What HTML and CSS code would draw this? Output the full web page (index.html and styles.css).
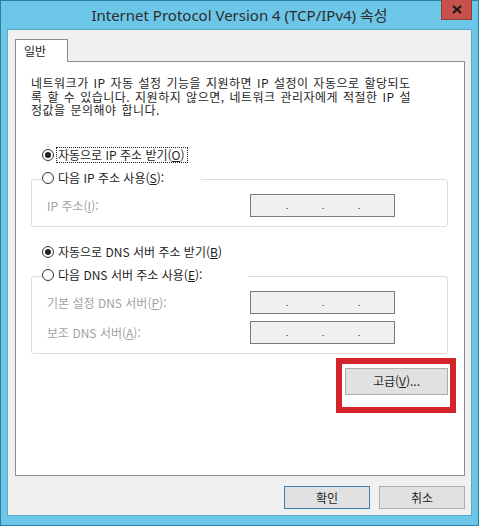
FILE: index.html
```html
<!DOCTYPE html>
<html lang="ko">
<head>
<meta charset="UTF-8" />
<title>Internet Protocol Version 4 (TCP/IPv4) 속성</title>
<link rel="stylesheet" href="styles.css">
</head>
<body>
<div class="window">
  <div class="titlebar">
    <div></div>
    <div class="title">Internet Protocol Version 4 (TCP/IPv4) 속성</div>
    <div class="close">
      <svg width="10" height="9" viewBox="0 0 10 9"><path d="M1 1 L9 8 M9 1 L1 8" stroke="#1b1b1b" stroke-width="2.2" fill="none"/></svg>
    </div>
  </div>

  <div class="client">
    <div class="tabs">
      <div class="tab">일반</div>
    </div>
    <div class="panel">
      <p class="intro">네트워크가 IP 자동 설정 기능을 지원하면 IP 설정이 자동으로 할당되도<br>록 할 수 있습니다. 지원하지 않으면, 네트워크 관리자에게 적절한 IP 설<br>정값을 문의해야 합니다.</p>

      <div class="radio-row">
        <span class="radio checked"></span>
        <span class="focus">자동으로 IP 주소 받기(<u>O</u>)</span>
      </div>

      <fieldset class="group">
        <legend class="legend-ip">
          <span class="radio"></span>
          <span>다음 IP 주소 사용(<u>S</u>):</span>
        </legend>
        <div class="field first">
          <span class="field-label">IP 주소(<u>I</u>):</span>
          <div class="ipbox"><i></i><i></i><i></i></div>
        </div>
      </fieldset>

      <div class="radio-row dns-auto">
        <span class="radio checked"></span>
        <span>자동으로 DNS 서버 주소 받기(<u>B</u>)</span>
      </div>

      <fieldset class="group">
        <legend class="legend-dns">
          <span class="radio"></span>
          <span>다음 DNS 서버 주소 사용(<u>E</u>):</span>
        </legend>
        <div class="field first">
          <span class="field-label">기본 설정 DNS 서버(<u>P</u>):</span>
          <div class="ipbox"><i></i><i></i><i></i></div>
        </div>
        <div class="field">
          <span class="field-label">보조 DNS 서버(<u>A</u>):</span>
          <div class="ipbox"><i></i><i></i><i></i></div>
        </div>
      </fieldset>

      <div class="advanced-row">
        <div class="highlight">
          <button class="btn advanced">고급(<u>V</u>)...</button>
        </div>
      </div>
    </div>

    <div class="actions">
      <button class="btn default">확인</button>
      <button class="btn">취소</button>
    </div>
  </div>
</div>
</body>
</html>
```

FILE: styles.css
```css
body {
  margin: 0; background: #fff;
  font-family: "Noto Sans CJK KR", "Noto Sans", sans-serif; font-size: 12px; color: #1e1e1e;
}
.window {
  width: 479px; height: 526px; box-sizing: border-box;
  border: 1px solid #2a7fa5; background: #6cc6e7;
  display: flex; flex-direction: column;
}
.titlebar {
  height: 28px; display: grid; grid-template-columns: 1fr auto 1fr; align-items: start;
}
.title {
  font-family: "Noto Sans", "Noto Sans CJK KR", sans-serif; font-size: 15px; color: #2d2d2d;
  line-height: 20px; padding-top: 4px; white-space: nowrap;
}
.close {
  justify-self: end; margin-right: 6px; margin-top: -1px;
  width: 31px; height: 20px; box-sizing: border-box;
  background: #c7514b; border: 1px solid #8f3d39; border-top: none;
  display: flex; align-items: center; justify-content: center;
}
.client {
  margin-left: 6px; width: 465px; height: 487px; box-sizing: border-box;
  border: 1px solid #5ba8c7; background: #f0f0f0;
  padding: 9px 6px 0 7px;
}
.tabs { display: flex; }
.tab {
  width: 53px; height: 23px; box-sizing: border-box; margin-bottom: -1px;
  background: #fff; border: 1px solid #898c95; border-bottom: none;
  padding: 3px 0 0 8px; line-height: 16px; position: relative; z-index: 1;
}
.panel {
  height: 415px; box-sizing: border-box;
  background: #fff; border: 1px solid #898c95;
}
.intro {
  margin: 14px 0 0 15px; line-height: 13.5px; white-space: nowrap;
  letter-spacing: 0.5px; word-spacing: 1px;
}
u { text-decoration-thickness: 1px; text-underline-offset: 1px; }

.radio-row {
  display: flex; align-items: center; height: 16px;
  margin: 30px 0 0 26px;
}
.radio-row.dns-auto { margin-top: 17px; }
.radio {
  width: 12px; height: 12px; box-sizing: border-box; flex: none;
  border: 1px solid #333; border-radius: 50%; background: #fff;
  display: inline-flex; align-items: center; justify-content: center;
  margin-right: 4px;
}
.radio.checked::after {
  content: ""; width: 6px; height: 6px; border-radius: 50%; background: #222;
}
.focus { outline: 1px dotted #222; outline-offset: 0; line-height: 14px; padding: 0 2px 0 1px; margin-left: -1px; }

.group {
  margin: 7px 0 0 15px; width: 417px; box-sizing: border-box;
  border: 1px solid #dcdcdc; border-radius: 3px;
  padding: 0 0 9px 10px;
}
.group legend {
  padding: 0 0 3px 0; height: 19px; box-sizing: border-box;
  display: flex; align-items: center; line-height: 16px; background: #fff;
}
.legend-ip { width: 159px; }
.legend-dns { width: 206px; }
.field {
  display: flex; align-items: center; margin-top: 7px; padding-left: 5px;
}
.field.first { margin-top: 5px; }
.field-label { width: 203px; color: #a2a2a2; }
.ipbox {
  width: 145px; height: 23px; box-sizing: border-box;
  border: 1px solid #7a7a7a; background: #f0f0f0;
  display: flex; align-items: flex-end; gap: 34px; padding: 0 0 7px 35px;
}
.ipbox i { width: 2px; height: 1px; background: #8a8a8a; }

.advanced-row { display: flex; justify-content: flex-end; margin: 4px 8px 0 0; }
.highlight {
  border: 6px solid #d4232b; padding: 4px 2px 12px 3px;
}
.btn {
  font-family: inherit; font-size: 12px; color: #1e1e1e;
  background: #e1e1e1; border: 1px solid #adadad; padding: 0;
  width: 86px; height: 23px; line-height: 16px;
}
.btn.advanced { width: 103px; height: 27px; }
.btn.default { border-color: #3c7fb1; }
.actions {
  display: flex; justify-content: flex-end; gap: 9px; margin-top: 10px;
}
```
